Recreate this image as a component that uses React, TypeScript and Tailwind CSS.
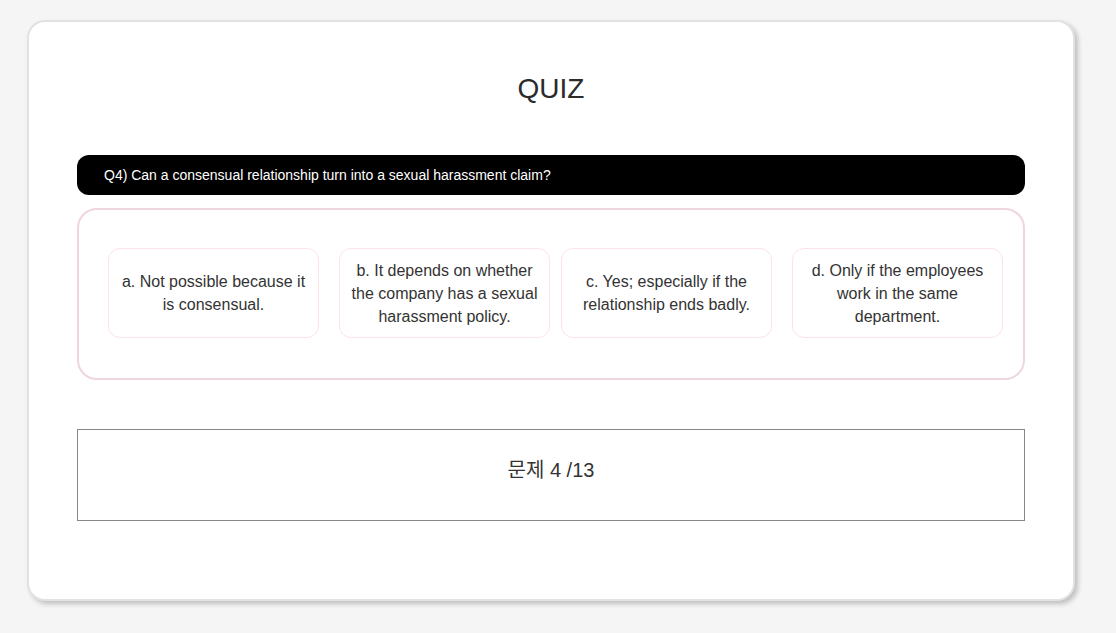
import React from 'react';

const options = [
  ['a. Not possible because it is consensual.', 'b. It depends on whether the company has a sexual harassment policy.'],
  ['c. Yes; especially if the relationship ends badly.', 'd. Only if the employees work in the same department.'],
];

const App: React.FC = () => {
  return (
    <div
      className="min-h-[633px] bg-[#f5f5f5] pt-[20px] pb-[30px]"
      style={{ fontFamily: '"Liberation Sans", Arial, "Noto Sans CJK KR", sans-serif' }}
    >
      <div className="ml-[27px] w-[1048px] rounded-[18px] border-2 border-[#e2e2e2] bg-white px-[48px] pt-[51px] pb-[78px] shadow-[3px_3px_5px_rgba(0,0,0,0.22)]">
        <h1 className="text-center text-[28px] leading-[32px] text-[#2b2b2b]">QUIZ</h1>

        {/* Question */}
        <div className="mt-[50px] flex h-[40px] items-center rounded-[12px] bg-black pl-[27px] text-[14px] text-white">
          Q4) Can a consensual relationship turn into a sexual harassment claim?
        </div>

        {/* Answer options */}
        <div className="mt-[13px] flex gap-[11px] rounded-[20px] border-2 border-[#efd6de] pt-[38px] pb-[40px] pl-[29px]">
          {options.map((pair, i) => (
            <div key={i} className="flex gap-[20px]">
              {pair.map((text) => (
                <div
                  key={text}
                  className="flex h-[90px] w-[211px] items-center justify-center rounded-[12px] border border-[#fce3ea] px-[9px] text-center text-[16px] leading-[23px] text-[#333]"
                >
                  {text}
                </div>
              ))}
            </div>
          ))}
        </div>

        {/* Progress */}
        <div className="mt-[49px] h-[92px] border border-[#888] pt-[27px] text-center text-[20px] leading-[26px] text-[#333]">
          문제 4 /13
        </div>
      </div>
    </div>
  );
};

export default App;
